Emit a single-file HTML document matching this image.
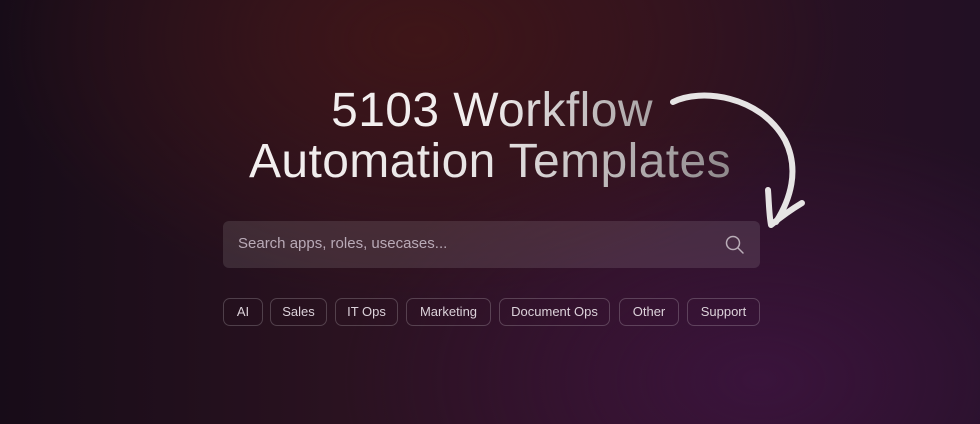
<!DOCTYPE html>
<html><head><meta charset="utf-8"><style>
html,body{margin:0;padding:0;width:980px;height:424px;overflow:hidden}
body{position:relative;font-family:"Liberation Sans",sans-serif;
background:
radial-gradient(ellipse 420px 260px at 420px 40px, rgba(66,22,22,0.85), rgba(66,22,22,0) 100%),
radial-gradient(ellipse 420px 260px at 760px 380px, rgba(62,20,66,0.8), rgba(62,20,66,0) 100%),
linear-gradient(90deg,#170c18 0%,#2a1220 35%,#2e1222 65%,#221024 100%);}
.t{position:absolute;left:0;width:980px;text-align:center;font-size:48px;line-height:50px;letter-spacing:0.4px;color:transparent}
.t1{top:86px;left:2px;background:linear-gradient(90deg,#f2eeee 0px,#f2eeee 480px,#a9a3a5 650px);-webkit-background-clip:text;background-clip:text}
.t2{top:137px;left:0;background:linear-gradient(90deg,#f4f0f0 250px,#e6e2e2 500px,#8e888b 731px);-webkit-background-clip:text;background-clip:text}
.search{position:absolute;left:223px;top:221px;width:537px;height:47px;border-radius:6px;background:rgba(255,255,255,0.11)}
.search span{position:absolute;left:15px;top:14px;font-size:15px;color:#b9aab7}
.pill{position:absolute;top:298px;height:26px;border:1px solid rgba(255,255,255,0.2);border-radius:7px;color:#dcd2da;font-size:13px;line-height:26px;text-align:center;box-sizing:content-box}
</style></head><body>
<div class="t t1">5103 Workflow</div>
<div class="t t2">Automation Templates</div>
<svg style="position:absolute;left:0;top:0" width="980" height="424">
<path d="M673 102 C 700 88, 760 95, 785 140 C 800 170, 790 200, 776 222" fill="none" stroke="#e6e4e4" stroke-width="6" stroke-linecap="round"/>
<path d="M768 190 C 769 203, 769 214, 771 225 C 782 216, 792 209, 802 203" fill="none" stroke="#e6e4e4" stroke-width="6" stroke-linecap="round" stroke-linejoin="round"/>
<circle cx="733" cy="243" r="6.5" fill="none" stroke="#b2a4b0" stroke-width="1.5"/>
<line x1="738" y1="248" x2="743" y2="253" stroke="#b2a4b0" stroke-width="1.5" stroke-linecap="round"/>
</svg>
<div class="search"><span>Search apps, roles, usecases...</span></div>
<div class="pill" style="left:223px;width:38px">AI</div>
<div class="pill" style="left:270px;width:55px">Sales</div>
<div class="pill" style="left:335px;width:61px">IT Ops</div>
<div class="pill" style="left:406px;width:83px">Marketing</div>
<div class="pill" style="left:499px;width:109px">Document Ops</div>
<div class="pill" style="left:619px;width:58px">Other</div>
<div class="pill" style="left:687px;width:71px">Support</div>
</body></html>
